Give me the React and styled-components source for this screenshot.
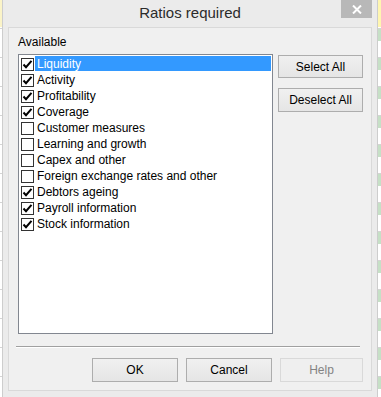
import React from 'react';
import styled, { createGlobalStyle } from 'styled-components';

const GlobalStyle = createGlobalStyle`
  html, body {
    margin: 0;
    padding: 0;
    background: #ffffff;
  }
  body {
    font-family: 'Liberation Sans', Arial, sans-serif;
    font-size: 12px;
    color: #000;
  }
`;

const Page = styled.div`
  display: flex;
  width: 381px;
  height: 397px;
  overflow: hidden;
`;

const SheetEdge = styled.div`
  width: ${(p) => p.$width}px;
  flex-shrink: 0;
  background:
    linear-gradient(${(p) => p.$top} 0 27px, transparent 27px),
    repeating-linear-gradient(
      to bottom,
      ${(p) => p.$cell} 0 ${(p) => p.$fill}px,
      #ffffff ${(p) => p.$fill}px 28px,
      #d4d4d4 28px 29px
    );
`;

const Window = styled.div`
  width: 374px;
  flex-shrink: 0;
  display: flex;
  flex-direction: column;
  background: #ebebeb;
  border-left: 1px solid #cdcdcd;
  border-right: 1px solid #cdcdcd;
`;

const TitleBar = styled.div`
  position: relative;
  height: 27px;
  line-height: 26px;
  text-align: center;
  font-size: 15px;
  color: #2b2b2b;
`;

const CloseButton = styled.div`
  position: absolute;
  top: 0;
  right: 5px;
  width: 31px;
  height: 18px;
  background: #b8b8b8;
  display: flex;
  align-items: center;
  justify-content: center;
`;

const Client = styled.div`
  margin: 0 5px 6px 5px;
  flex: 1;
  background: #f0f0f0;
  border: 1px solid #d9d9d9;
  padding: 7px 8px 8px 9px;
  display: flex;
  flex-direction: column;
`;

const GroupLabel = styled.div`
  line-height: 14px;
  margin-bottom: 5px;
`;

const MainRow = styled.div`
  display: flex;
  gap: 5px;
`;

const ListBox = styled.div`
  width: 253px;
  height: 277px;
  background: #ffffff;
  border: 1px solid #828790;
  padding: 1px 1px 0 2px;
  box-sizing: content-box;
`;

const Item = styled.div`
  display: flex;
  align-items: flex-start;
  height: 16px;
`;

const Box = styled.div`
  width: 11px;
  height: 11px;
  margin-top: 2px;
  border: 1px solid #333333;
  background: #ffffff;
  display: flex;
  align-items: center;
  justify-content: center;
  flex-shrink: 0;
`;

const ItemText = styled.span`
  margin-left: 1px;
  padding-left: 2px;
  height: 15px;
  line-height: 16px;
  flex: 1;
  white-space: nowrap;
  background: ${(p) => (p.$selected ? '#3399ff' : 'transparent')};
  color: ${(p) => (p.$selected ? '#ffffff' : '#000000')};
`;

const SideButtons = styled.div`
  display: flex;
  flex-direction: column;
  gap: 10px;
  margin-top: 1px;
`;

const Button = styled.div`
  width: ${(p) => p.$width || 85}px;
  height: ${(p) => p.$height || 23}px;
  box-sizing: border-box;
  border: 1px solid ${(p) => (p.$disabled ? '#d9d9d9' : '#adadad')};
  background: ${(p) =>
    p.$disabled ? '#efefef' : 'linear-gradient(to bottom, #f0f0f0, #e5e5e5)'};
  color: ${(p) => (p.$disabled ? '#838383' : '#000000')};
  display: flex;
  align-items: center;
  justify-content: center;
  font-size: 12px;
`;

const Separator = styled.div`
  margin: 12px 3px 0 -2px;
  height: 1px;
  background: #a0a0a0;
  border-bottom: 1px solid #ffffff;
`;

const ButtonRow = styled.div`
  margin-top: 10px;
  display: flex;
  justify-content: flex-end;
  gap: 8px;
`;

const Check = () => (
  <svg width="11" height="11" viewBox="0 0 11 11">
    <path d="M1.5 5.5 L4 8.2 L9.5 1.8" fill="none" stroke="#000" strokeWidth="2" />
  </svg>
);

const CloseIcon = () => (
  <svg width="10" height="9" viewBox="0 0 10 9">
    <path d="M1 0.5 L9 8.5 M9 0.5 L1 8.5" stroke="#fff" strokeWidth="2" />
  </svg>
);

const ratios = [
  { name: 'Liquidity', checked: true, selected: true },
  { name: 'Activity', checked: true },
  { name: 'Profitability', checked: true },
  { name: 'Coverage', checked: true },
  { name: 'Customer measures', checked: false },
  { name: 'Learning and growth', checked: false },
  { name: 'Capex and other', checked: false },
  { name: 'Foreign exchange rates and other', checked: false },
  { name: 'Debtors ageing', checked: true },
  { name: 'Payroll information', checked: true },
  { name: 'Stock information', checked: true },
];

export default function App() {
  return (
    <>
      <GlobalStyle />
      <Page>
        <SheetEdge $width={2} $top="#fbf4c8" $cell="#f7f7f7" $fill={0} />
        <Window>
          <TitleBar>
            Ratios required
            <CloseButton>
              <CloseIcon />
            </CloseButton>
          </TitleBar>
          <Client>
            <GroupLabel>Available</GroupLabel>
            <MainRow>
              <ListBox>
                {ratios.map((r) => (
                  <Item key={r.name}>
                    <Box>{r.checked && <Check />}</Box>
                    <ItemText $selected={r.selected}>{r.name}</ItemText>
                  </Item>
                ))}
              </ListBox>
              <SideButtons>
                <Button>Select All</Button>
                <Button $height={24}>Deselect All</Button>
              </SideButtons>
            </MainRow>
            <Separator />
            <ButtonRow>
              <Button $width={86} $height={24}>OK</Button>
              <Button $width={86} $height={24}>Cancel</Button>
              <Button $width={83} $height={24} $disabled>Help</Button>
            </ButtonRow>
          </Client>
        </Window>
        <SheetEdge $width={3} $top="#fff6b0" $cell="#c6e0c6" $fill={12} />
      </Page>
    </>
  );
}
